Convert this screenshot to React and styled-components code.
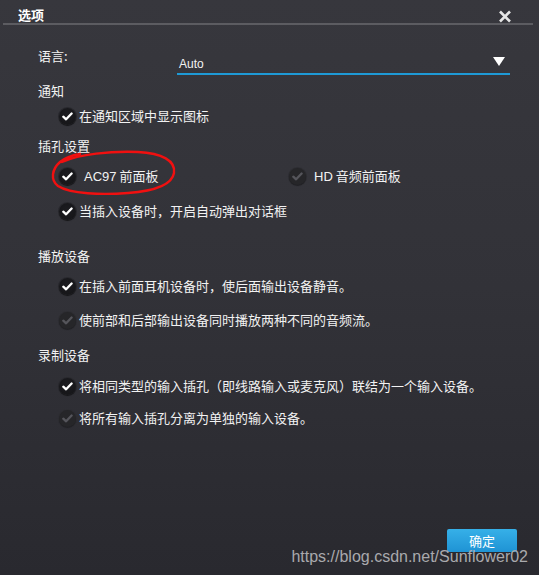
import React from "react";
import styled, { createGlobalStyle } from "styled-components";

const GlobalStyle = createGlobalStyle`
  html, body {
    margin: 0;
    padding: 0;
    background: #2b2b31;
  }
  body {
    font-family: "Noto Sans CJK SC", "Liberation Sans", sans-serif;
  }
`;

const Dialog = styled.div`
  position: relative;
  width: 539px;
  height: 575px;
  display: flex;
  flex-direction: column;
  background: linear-gradient(180deg, #37373d 0%, #323238 50%, #29292f 100%);
  color: #f2f2f2;
  overflow: hidden;
`;

const TitleBar = styled.div`
  display: flex;
  align-items: center;
  justify-content: space-between;
  height: 16px;
  margin: 0 6px 0 3px;
  padding: 7px 20px 0 15px;
  border-bottom: 2px solid #5c5c61;
`;

const Title = styled.span`
  font-size: 13px;
  font-weight: bold;
  line-height: 16px;
  color: #ffffff;
`;

const CloseButton = styled.button`
  display: flex;
  align-items: center;
  justify-content: center;
  width: 16px;
  height: 16px;
  margin-top: 3px;
  padding: 0;
  border: none;
  background: none;
  cursor: pointer;
`;

const Body = styled.div`
  display: flex;
  flex-direction: column;
  padding: 0 0 0 38px;
`;

const LangRow = styled.div`
  display: flex;
  align-items: flex-start;
  margin-top: 21px;
`;

const Label = styled.div`
  font-size: 13px;
  line-height: 20px;
  margin-top: ${(p) => p.$top || 0}px;
`;

const LangLabel = styled(Label)`
  width: 139px;
`;

const Select = styled.div`
  display: flex;
  align-items: center;
  justify-content: space-between;
  width: 326px;
  height: 16px;
  padding: 10px 5px 1px 2px;
  border-bottom: 2px solid #1e9ad6;
  font-family: "Liberation Sans", "Noto Sans CJK SC", sans-serif;
  font-size: 12px;
  line-height: 16px;
`;

const Arrow = styled.span`
  width: 0;
  height: 0;
  margin-top: -5px;
  border-left: 6px solid transparent;
  border-right: 6px solid transparent;
  border-top: 9px solid #ffffff;
`;

const CheckRow = styled.div`
  display: flex;
  align-items: center;
  height: 20px;
  padding-left: 21px;
  margin-top: ${(p) => p.$top || 0}px;
`;

const TwoCols = styled.div`
  display: grid;
  grid-template-columns: 230px 1fr;
`;

const Check = styled.label`
  display: flex;
  align-items: center;
  gap: ${(p) => p.$gap || 3}px;
  height: 20px;
  font-size: 13px;
  line-height: 20px;
  color: #f2f2f2;
`;

const Circle = styled.span`
  display: flex;
  align-items: center;
  justify-content: center;
  width: 17px;
  height: 17px;
  margin-top: 1px;
  border-radius: 50%;
  background: ${(p) =>
    p.$on
      ? "radial-gradient(circle at 50% 40%, #1c1c20 0%, #141417 100%)"
      : "#262629"};
  box-shadow: ${(p) =>
    p.$on
      ? "0 1px 1px rgba(0,0,0,0.5), 0 0 0 1px #29292e"
      : "0 1px 1px rgba(0,0,0,0.3), 0 0 0 1px #2e2e33"};
`;

const Latin = styled.span`
  font-family: "Liberation Sans", sans-serif;
`;

const Footer = styled.div`
  display: flex;
  justify-content: flex-end;
  margin-top: auto;
  padding: 0 22px 23px 0;
`;

const OkButton = styled.button`
  width: 70px;
  height: 23px;
  padding: 0;
  border: none;
  border-radius: 2px;
  background: linear-gradient(180deg, #36b0e8 0%, #1f93d4 100%);
  color: #ffffff;
  font-family: "Noto Sans CJK SC", sans-serif;
  font-size: 13px;
  line-height: 23px;
  cursor: pointer;
`;

const Annotation = styled.svg`
  position: absolute;
  left: 50px;
  top: 149px;
  pointer-events: none;
`;

const Watermark = styled.div`
  position: absolute;
  right: 11px;
  bottom: 9px;
  font-family: "Liberation Sans", sans-serif;
  font-size: 16px;
  line-height: 18px;
  color: #a9a9ad;
  pointer-events: none;
`;

function CheckMark({ on }) {
  return (
    <Circle $on={on}>
      <svg width="11" height="9" viewBox="0 0 11 9">
        <path
          d="M1.3 4.7 L4.1 7.3 L9.6 1.5"
          fill="none"
          stroke={on ? "#ffffff" : "#55555b"}
          strokeWidth="2.3"
          strokeLinecap="round"
          strokeLinejoin="round"
        />
      </svg>
    </Circle>
  );
}

function Option({ on = true, gap, children }) {
  return (
    <Check $gap={gap}>
      <CheckMark on={on} />
      <span>{children}</span>
    </Check>
  );
}

export default function App() {
  return (
    <>
      <GlobalStyle />
      <Dialog>
        <TitleBar>
          <Title>选项</Title>
          <CloseButton aria-label="关闭">
            <svg width="14" height="13" viewBox="0 0 14 13">
              <path
                d="M2 1.5 L12 11.5 M12 1.5 L2 11.5"
                stroke="#e6e6e6"
                strokeWidth="2.6"
              />
            </svg>
          </CloseButton>
        </TitleBar>

        <Body>
          <LangRow>
            <LangLabel>语言:</LangLabel>
            <Select>
              <span>Auto</span>
              <Arrow />
            </Select>
          </LangRow>

          <Label $top={6}>通知</Label>
          <CheckRow $top={5}>
            <Option>在通知区域中显示图标</Option>
          </CheckRow>

          <Label $top={10}>插孔设置</Label>
          <CheckRow $top={10}>
            <TwoCols>
              <Option gap={8}>
                <Latin>AC97</Latin> 前面板
              </Option>
              <Option on={false} gap={8}>
                <Latin>HD</Latin> 音频前面板
              </Option>
            </TwoCols>
          </CheckRow>
          <CheckRow $top={15}>
            <Option>当插入设备时，开启自动弹出对话框</Option>
          </CheckRow>

          <Label $top={25}>播放设备</Label>
          <CheckRow $top={10}>
            <Option>在插入前面耳机设备时，使后面输出设备静音。</Option>
          </CheckRow>
          <CheckRow $top={14}>
            <Option on={false}>使前部和后部输出设备同时播放两种不同的音频流。</Option>
          </CheckRow>

          <Label $top={15}>录制设备</Label>
          <CheckRow $top={11}>
            <Option>将相同类型的输入插孔（即线路输入或麦克风）联结为一个输入设备。</Option>
          </CheckRow>
          <CheckRow $top={12}>
            <Option on={false}>将所有输入插孔分离为单独的输入设备。</Option>
          </CheckRow>
        </Body>

        <Footer>
          <OkButton>确定</OkButton>
        </Footer>

        <Annotation width="130" height="48" viewBox="0 0 130 48">
          <path
            d="M12 13 C30 5 60 2 88 3 C112 4 126 12 124 24 C122 36 104 42 78 44 C52 46 20 45 8 37 C0 31 2 20 10 13 C16 8 24 6 30 5"
            fill="none"
            stroke="#f01010"
            strokeWidth="2.4"
            strokeLinecap="round"
          />
        </Annotation>

        <Watermark>https://blog.csdn.net/Sunflower02</Watermark>
      </Dialog>
    </>
  );
}
